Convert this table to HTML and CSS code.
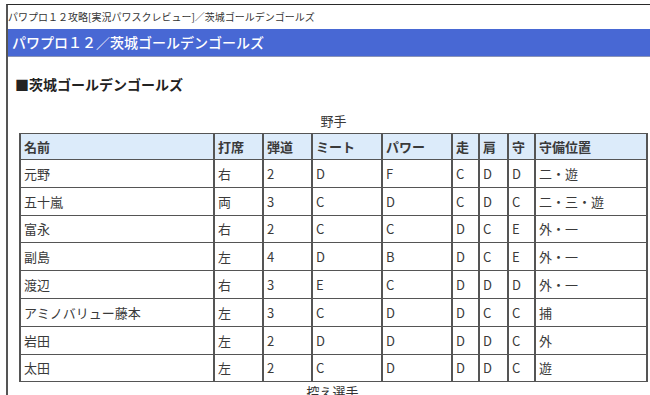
FILE: index.html
```html
<!DOCTYPE html>
<html lang="ja">
<head>
<meta charset="utf-8">
<link rel="stylesheet" href="styles.css">
</head>
<body>
<div class="frame">
  <div class="crumb">パワプロ１２攻略[実況パワスクレビュー]／茨城ゴールデンゴールズ</div>
  <h1 class="bar">パワプロ１２／茨城ゴールデンゴールズ</h1>
  <div class="content">
    <h2 class="team">■茨城ゴールデンゴールズ</h2>
    <table class="roster">
      <caption>野手</caption>
      <colgroup>
        <col class="c-name"><col class="c-bat"><col class="c-traj"><col class="c-meet"><col class="c-pow"><col class="c-s"><col class="c-s2"><col class="c-s"><col class="c-pos">
      </colgroup>
      <thead>
        <tr><th>名前</th><th>打席</th><th>弾道</th><th>ミート</th><th>パワー</th><th>走</th><th>肩</th><th>守</th><th>守備位置</th></tr>
      </thead>
      <tbody>
        <tr><td>元野</td><td>右</td><td>2</td><td>D</td><td>F</td><td>C</td><td>D</td><td>D</td><td>二・遊</td></tr>
        <tr><td>五十嵐</td><td>両</td><td>3</td><td>C</td><td>D</td><td>C</td><td>D</td><td>C</td><td>二・三・遊</td></tr>
        <tr><td>富永</td><td>右</td><td>2</td><td>C</td><td>C</td><td>D</td><td>C</td><td>E</td><td>外・一</td></tr>
        <tr><td>副島</td><td>左</td><td>4</td><td>D</td><td>B</td><td>D</td><td>C</td><td>E</td><td>外・一</td></tr>
        <tr><td>渡辺</td><td>右</td><td>3</td><td>E</td><td>C</td><td>D</td><td>D</td><td>D</td><td>外・一</td></tr>
        <tr><td>アミノバリュー藤本</td><td>左</td><td>3</td><td>C</td><td>D</td><td>D</td><td>C</td><td>C</td><td>捕</td></tr>
        <tr><td>岩田</td><td>左</td><td>2</td><td>D</td><td>D</td><td>D</td><td>D</td><td>C</td><td>外</td></tr>
        <tr><td>太田</td><td>左</td><td>2</td><td>C</td><td>D</td><td>D</td><td>D</td><td>C</td><td>遊</td></tr>
      </tbody>
    </table>
    <div class="sub">控え選手</div>
  </div>
</div>
</body>
</html>
```

FILE: styles.css
```css
html, body {
  margin: 0;
  padding: 0;
  background: #fff;
}
body {
  font-family: "Noto Sans CJK JP", "Noto Sans", sans-serif;
  color: #333;
  overflow: hidden;
}
.frame {
  margin: 4px 0 0 6px;
  border-top: 1px solid #2a2a2a;
  border-left: 2px solid #555;
  min-height: 400px;
}
.crumb {
  height: 24px;
  line-height: 24px;
  font-size: 10px;
  color: #333;
  white-space: nowrap;
}
.bar {
  margin: 0;
  height: 27px;
  line-height: 27px;
  padding-left: 4px;
  background: #4868d4;
  border-bottom: 1px solid #8a94b8;
  color: #fff;
  font-size: 14px;
  font-weight: 500;
  white-space: nowrap;
}
.content {
  padding-left: 11px;
}
.team {
  margin: 17px 0 0 -4px;
  font-size: 14px;
  font-weight: bold;
  line-height: 20px;
  color: #222;
}
.roster {
  margin-top: 18px;
  width: 627px;
  table-layout: fixed;
  border-collapse: collapse;
  font-size: 13px;
  color: #3a3a3a;
}
.roster caption {
  font-size: 13px;
  line-height: 18px;
  padding-bottom: 3px;
}
.c-name { width: 194px; }
.c-bat { width: 49px; }
.c-traj { width: 49px; }
.c-meet { width: 70px; }
.c-pow { width: 70px; }
.c-s { width: 27px; }
.c-s2 { width: 29px; }
.c-pos { width: 112px; }
.roster th, .roster td {
  border: 1px solid #555;
  border-left-width: 2px;
  border-right-width: 2px;
  text-align: left;
  padding: 0 3px;
  height: 26.8px;
  white-space: nowrap;
  overflow: hidden;
}
.roster th {
  background: #dcebfa;
  font-weight: bold;
  height: 25px;
}
.sub {
  width: 627px;
  text-align: center;
  font-size: 13px;
  line-height: 18px;
  padding-top: 1px;
}
```
